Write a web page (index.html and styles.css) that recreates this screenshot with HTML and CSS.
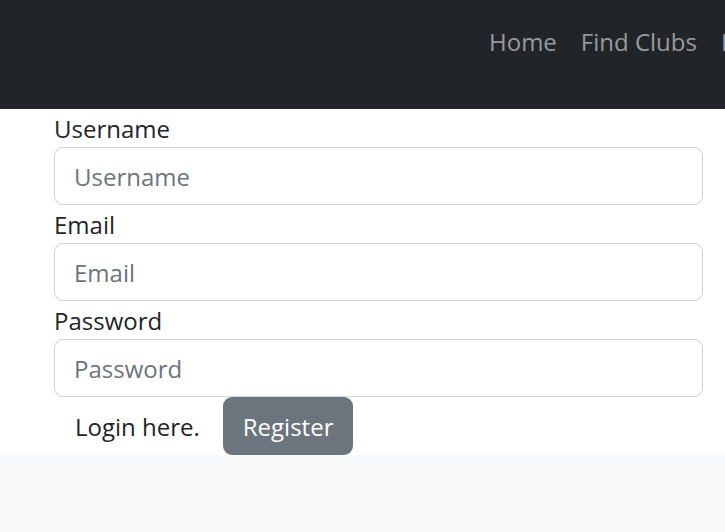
FILE: index.html
```html
<!DOCTYPE html>
<html>
<head>
<meta charset="utf-8">
<link rel="stylesheet" href="styles.css">
</head>
<body>
<nav class="navbar">
  <ul class="nav-links">
    <li><a class="nav-link" href="#">Home</a></li>
    <li><a class="nav-link" href="#">Find Clubs</a></li>
    <li><a class="nav-link" href="#">Find Races</a></li>
  </ul>
</nav>
<main class="main">
  <form class="form">
    <label class="label" for="u">Username</label>
    <input class="input" id="u" type="text" placeholder="Username">
    <label class="label" for="e">Email</label>
    <input class="input" id="e" type="email" placeholder="Email">
    <label class="label" for="p">Password</label>
    <input class="input" id="p" type="password" placeholder="Password">
    <div class="actions">
      <a class="login-link" href="#">Login here.</a>
      <button class="btn" type="button">Register</button>
    </div>
  </form>
</main>
</body>
</html>
```
FILE: styles.css
```css
html, body {
  margin: 0;
  padding: 0;
  overflow: hidden;
}
body {
  background: #f8f9fa;
  font-family: "Open Sans", "Noto Sans", sans-serif;
  font-size: 24px;
  color: #212529;
  width: 725px;
  height: 532px;
}
.navbar {
  background: #212529;
  height: 109px;
  display: flex;
  justify-content: flex-start;
  overflow: hidden;
}
.nav-links {
  list-style: none;
  margin: 0;
  padding: 22px 0 0 477px;
  display: flex;
  flex-shrink: 0;
  white-space: nowrap;
}
.nav-link {
  display: block;
  padding: 0 12px;
  color: rgba(255, 255, 255, 0.55);
  text-decoration: none;
  line-height: 40px;
}
.main {
  background: #fff;
  padding: 0 22px 0 54px;
}
.form {
  display: flex;
  flex-direction: column;
}
.label {
  display: block;
  line-height: 40px;
  height: 38px;
}
.input {
  box-sizing: border-box;
  height: 58px;
  width: 100%;
  margin: 0;
  border: 1px solid #ced4da;
  border-radius: 9px;
  padding: 0 19px;
  font: inherit;
  color: #212529;
  background: #fff;
}
.input::placeholder {
  color: #6c757d;
  opacity: 1;
}
.actions {
  display: flex;
  align-items: center;
  height: 58px;
}
.login-link {
  color: #212529;
  text-decoration: none;
  padding: 0 23px 0 21px;
}
.btn {
  font: inherit;
  background: #6c757d;
  color: #fff;
  border: 0;
  border-radius: 9px;
  height: 58px;
  padding: 0 20px;
}
```
